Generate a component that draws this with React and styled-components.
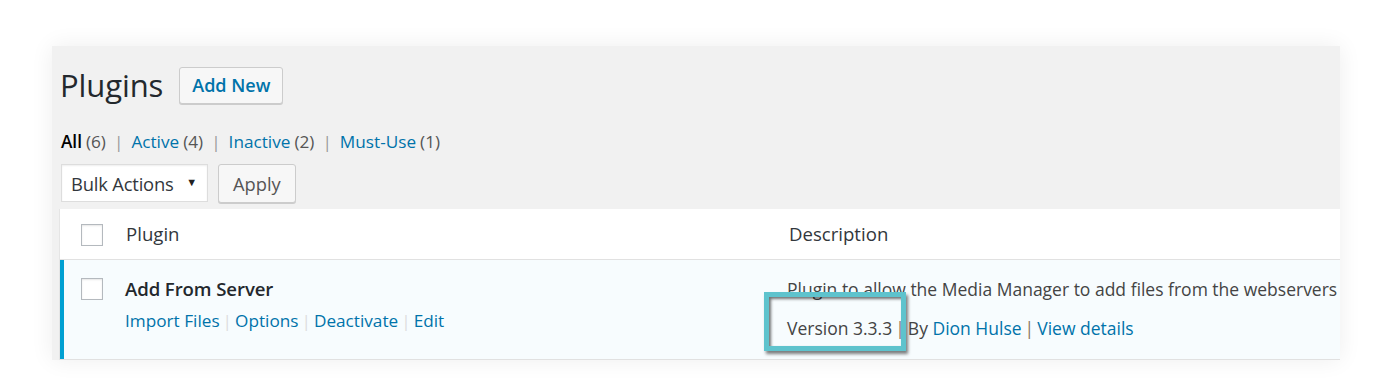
import React from "react";
import styled, { createGlobalStyle } from "styled-components";

const GlobalStyle = createGlobalStyle`
  html, body {
    margin: 0;
    background: #fff;
  }
  body {
    font-family: "Open Sans", "Noto Sans", sans-serif;
    color: #444;
  }
`;

const Page = styled.div`
  width: 1382px;
  height: 378px;
  padding: 46px 42px 0 52px;
  box-sizing: border-box;
  overflow: hidden;
`;

const Panel = styled.div`
  height: 314px;
  background: #f1f1f1;
  box-shadow: 0 0 22px rgba(0, 0, 0, 0.07);
  padding: 20px 0 0 8px;
  box-sizing: border-box;
  overflow: hidden;
`;

const Heading = styled.div`
  display: flex;
  align-items: center;
  gap: 16px;
  height: 38px;
`;

const Title = styled.h1`
  margin: 0;
  font-size: 31px;
  font-weight: 400;
  color: #23282d;
  letter-spacing: -0.1px;
`;

const Button = styled.button`
  font-family: inherit;
  height: ${(p) => p.$h || 37}px;
  padding: 0 ${(p) => p.$px || 12}px;
  border: 1px solid #ccc;
  border-radius: 3px;
  background: #f7f7f7;
  box-shadow: 0 1px 0 #ccc;
  font-size: ${(p) => p.$size || 16}px;
  font-weight: ${(p) => p.$weight || 400};
  color: ${(p) => p.$color || "#555"};
  cursor: pointer;
`;

const Filters = styled.ul`
  list-style: none;
  display: flex;
  margin: 21px 0 0 1px;
  padding: 0;
  font-size: 17.2px;
  color: #666;
  height: 32px;
  align-items: center;
`;

const FilterItem = styled.li`
  &:not(:last-child)::after {
    content: "|";
    color: #999;
    margin: 0 8px 0 8px;
  }
`;

const FilterLink = styled.a`
  color: ${(p) => (p.$current ? "#000" : "#0073aa")};
  font-weight: ${(p) => (p.$current ? 600 : 400)};
  text-decoration: none;
`;

const Count = styled.span`
  color: #555;
  margin-left: 4px;
`;

const TableNav = styled.div`
  display: flex;
  gap: 10px;
  margin: 7px 0 0 1px;
  height: 45px;
  align-items: flex-start;
`;

const Select = styled.div`
  width: 147px;
  height: 38px;
  box-sizing: border-box;
  background: #fff;
  border: 1px solid #ddd;
  box-shadow: inset 0 1px 2px rgba(0, 0, 0, 0.07);
  display: flex;
  align-items: center;
  justify-content: space-between;
  padding: 0 10px 0 9px;
  font-size: 18.4px;
  color: #32373c;
  letter-spacing: -0.2px;
`;

const Caret = styled.span`
  font-size: 11px;
  color: #222;
  margin-top: -4px;
`;

const Table = styled.div`
  width: 1290px;
  background: #fff;
  border-left: 1px solid #e5e5e5;
  margin-left: -1px;
`;

const Row = styled.div`
  display: grid;
  grid-template-columns: 66px 663px 1fr;
  background: ${(p) => (p.$active ? "#f7fcfe" : "#fff")};
  border-bottom: 1px solid #e1e1e1;
  box-shadow: ${(p) => (p.$active ? "inset 4px 0 0 #00a0d2" : "none")};
  min-height: ${(p) => p.$h}px;
  box-sizing: border-box;
`;

const CheckCell = styled.div`
  padding: ${(p) => p.$top}px 0 0 21px;
`;

const Checkbox = styled.span`
  display: block;
  width: 22px;
  height: 22px;
  box-sizing: border-box;
  border: 1px solid #b4b9be;
  background: #fff;
  box-shadow: inset 0 1px 2px rgba(0, 0, 0, 0.1);
`;

const HeaderCell = styled.div`
  font-size: 18.6px;
  color: #32373c;
  padding-top: 12px;
  line-height: 26px;
`;

const Cell = styled.div`
  padding-top: 16px;
  margin-left: ${(p) => p.$ml || 0}px;
  font-size: 17.5px;
  white-space: nowrap;
`;

const PluginName = styled.strong`
  display: block;
  font-size: 18.6px;
  font-weight: 600;
  color: #23282d;
  line-height: 26px;
  letter-spacing: -0.1px;
`;

const Actions = styled.div`
  margin-top: 6px;
  line-height: 26px;
  font-size: 17.2px;
`;

const Link = styled.a`
  color: #0073aa;
  text-decoration: none;
`;

const Sep = styled.span`
  color: ${(p) => p.$c || "#ddd"};
  margin: 0 ${(p) => p.$m || 3}px;
`;

const DescText = styled.p`
  margin: 0;
  line-height: 26px;
  color: #444;
`;

const Meta = styled.div`
  margin-top: 13px;
  line-height: 26px;
  color: #444;
`;

const Highlight = styled.span`
  position: relative;
  &::after {
    content: "";
    position: absolute;
    left: -23px;
    top: -24px;
    width: 142px;
    height: 59px;
    box-sizing: border-box;
    border: 5px solid #5ec3cd;
    box-shadow: 2px 3px 3px rgba(0, 0, 0, 0.5),
      inset 2px 2px 3px rgba(0, 0, 0, 0.55);
    pointer-events: none;
  }
`;

export default function App() {
  return (
    <>
      <GlobalStyle />
      <Page>
        <Panel>
          <Heading>
            <Title>Plugins</Title>
            <Button $h={37} $size={18} $weight={600} $color="#0073aa">
              Add New
            </Button>
          </Heading>
          <Filters>
            <FilterItem>
              <FilterLink $current>All</FilterLink>
              <Count>(6)</Count>
            </FilterItem>
            <FilterItem>
              <FilterLink>Active</FilterLink>
              <Count>(4)</Count>
            </FilterItem>
            <FilterItem>
              <FilterLink>Inactive</FilterLink>
              <Count>(2)</Count>
            </FilterItem>
            <FilterItem>
              <FilterLink>Must-Use</FilterLink>
              <Count>(1)</Count>
            </FilterItem>
          </Filters>
          <TableNav>
            <Select>
              Bulk Actions <Caret>▼</Caret>
            </Select>
            <Button $h={39} $px={14} $size={18.3}>Apply</Button>
          </TableNav>
          <Table>
            <Row $h={51}>
              <CheckCell $top={15}>
                <Checkbox />
              </CheckCell>
              <HeaderCell>Plugin</HeaderCell>
              <HeaderCell>Description</HeaderCell>
            </Row>
            <Row $h={100} $active>
              <CheckCell $top={18}>
                <Checkbox />
              </CheckCell>
              <Cell $ml={-1}>
                <PluginName>Add From Server</PluginName>
                <Actions>
                  <Link>Import Files</Link>
                  <Sep>|</Sep>
                  <Link>Options</Link>
                  <Sep>|</Sep>
                  <Link>Deactivate</Link>
                  <Sep>|</Sep>
                  <Link>Edit</Link>
                </Actions>
              </Cell>
              <Cell $ml={-2}>
                <DescText>
                  Plugin to allow the Media Manager to add files from the
                  webservers filesystem.
                </DescText>
                <Meta>
                  <Highlight>Version 3.3.3</Highlight>
                  <Sep $c="#8a7560">|</Sep>
                  By <Link>Dion Hulse</Link>
                  <Sep $c="#8a7560">|</Sep>
                  <Link>View details</Link>
                </Meta>
              </Cell>
            </Row>
          </Table>
        </Panel>
      </Page>
    </>
  );
}
